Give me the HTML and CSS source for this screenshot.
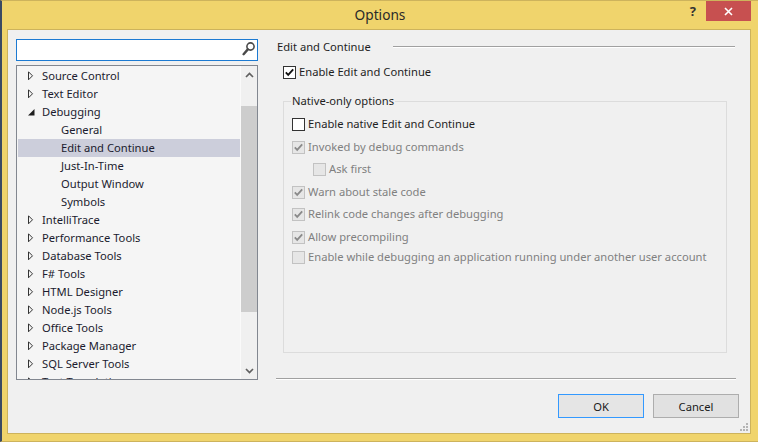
FILE: index.html
```html
<!DOCTYPE html>
<html>
<head>
<meta charset="utf-8">
<link rel="stylesheet" href="styles.css">
</head>
<body>
<div class="window">
  <div class="titlebar">
    <div class="title">Options</div>
    <div class="controls">
      <div class="help">?</div>
      <div class="close">
        <svg width="9" height="9" viewBox="0 0 9 9"><path d="M1 1 L8 8 M8 1 L1 8" stroke="#fff" stroke-width="1.6" fill="none"/></svg>
      </div>
    </div>
  </div>
  <div class="client">
    <div class="left">
      <div class="search">
        <svg class="search-icon" width="14" height="16" viewBox="0 0 14 16"><circle cx="8.5" cy="5.5" r="3.6" stroke="#4a4a4a" stroke-width="1.6" fill="none"/><path d="M5.8 8.4 L1.6 13.2" stroke="#4a4a4a" stroke-width="2.4" stroke-linecap="round"/></svg>
      </div>
      <div class="tree">
        <div class="list">
          <div class="row"><span class="arrow"><svg width="6" height="10" viewBox="0 0 6 10"><path d="M0.5 0.8 L4.5 4.8 L0.5 8.8 Z" fill="none" stroke="#333" stroke-width="1"/></svg></span>Source Control</div>
          <div class="row"><span class="arrow"><svg width="6" height="10" viewBox="0 0 6 10"><path d="M0.5 0.8 L4.5 4.8 L0.5 8.8 Z" fill="none" stroke="#333" stroke-width="1"/></svg></span>Text Editor</div>
          <div class="row"><span class="arrow"><svg width="7" height="7" viewBox="0 0 7 7"><path d="M0 6.5 L6.5 6.5 L6.5 0 Z" fill="#1e1e1e"/></svg></span>Debugging</div>
          <div class="row child">General</div>
          <div class="row child sel">Edit and Continue</div>
          <div class="row child">Just-In-Time</div>
          <div class="row child">Output Window</div>
          <div class="row child">Symbols</div>
          <div class="row"><span class="arrow"><svg width="6" height="10" viewBox="0 0 6 10"><path d="M0.5 0.8 L4.5 4.8 L0.5 8.8 Z" fill="none" stroke="#333" stroke-width="1"/></svg></span>IntelliTrace</div>
          <div class="row"><span class="arrow"><svg width="6" height="10" viewBox="0 0 6 10"><path d="M0.5 0.8 L4.5 4.8 L0.5 8.8 Z" fill="none" stroke="#333" stroke-width="1"/></svg></span>Performance Tools</div>
          <div class="row"><span class="arrow"><svg width="6" height="10" viewBox="0 0 6 10"><path d="M0.5 0.8 L4.5 4.8 L0.5 8.8 Z" fill="none" stroke="#333" stroke-width="1"/></svg></span>Database Tools</div>
          <div class="row"><span class="arrow"><svg width="6" height="10" viewBox="0 0 6 10"><path d="M0.5 0.8 L4.5 4.8 L0.5 8.8 Z" fill="none" stroke="#333" stroke-width="1"/></svg></span>F# Tools</div>
          <div class="row"><span class="arrow"><svg width="6" height="10" viewBox="0 0 6 10"><path d="M0.5 0.8 L4.5 4.8 L0.5 8.8 Z" fill="none" stroke="#333" stroke-width="1"/></svg></span>HTML Designer</div>
          <div class="row"><span class="arrow"><svg width="6" height="10" viewBox="0 0 6 10"><path d="M0.5 0.8 L4.5 4.8 L0.5 8.8 Z" fill="none" stroke="#333" stroke-width="1"/></svg></span>Node.js Tools</div>
          <div class="row"><span class="arrow"><svg width="6" height="10" viewBox="0 0 6 10"><path d="M0.5 0.8 L4.5 4.8 L0.5 8.8 Z" fill="none" stroke="#333" stroke-width="1"/></svg></span>Office Tools</div>
          <div class="row"><span class="arrow"><svg width="6" height="10" viewBox="0 0 6 10"><path d="M0.5 0.8 L4.5 4.8 L0.5 8.8 Z" fill="none" stroke="#333" stroke-width="1"/></svg></span>Package Manager</div>
          <div class="row"><span class="arrow"><svg width="6" height="10" viewBox="0 0 6 10"><path d="M0.5 0.8 L4.5 4.8 L0.5 8.8 Z" fill="none" stroke="#333" stroke-width="1"/></svg></span>SQL Server Tools</div>
          <div class="row"><span class="arrow"><svg width="6" height="10" viewBox="0 0 6 10"><path d="M0.5 0.8 L4.5 4.8 L0.5 8.8 Z" fill="none" stroke="#333" stroke-width="1"/></svg></span>Text Templating</div>
        </div>
        <div class="scrollbar">
          <div class="sb-btn"><svg width="9" height="6" viewBox="0 0 9 6"><path d="M1 5 L4.5 1.5 L8 5" fill="none" stroke="#606060" stroke-width="1.7"/></svg></div>
          <div class="sb-track"><div class="sb-thumb"></div></div>
          <div class="sb-btn"><svg width="9" height="6" viewBox="0 0 9 6"><path d="M1 1 L4.5 4.5 L8 1" fill="none" stroke="#606060" stroke-width="1.7"/></svg></div>
        </div>
      </div>
    </div>
    <div class="right">
      <div class="page">
        <div class="hdr"><span>Edit and Continue</span><span class="hdr-line"></span></div>
        <div class="check-row top-check">
          <span class="cb"><svg width="11" height="11" viewBox="0 0 11 11"><path d="M1.8 5.4 L4.2 7.9 L9.2 2.4" fill="none" stroke="#111" stroke-width="1.8"/></svg></span>
          <span>Enable Edit and Continue</span>
        </div>
        <fieldset class="group">
          <legend>Native-only options</legend>
          <div class="check-row g-row r1">
            <span class="cb"></span>
            <span>Enable native Edit and Continue</span>
          </div>
          <div class="check-row g-row r2 dis">
            <span class="cb"><svg width="11" height="11" viewBox="0 0 11 11"><path d="M1.8 5.4 L4.2 7.9 L9.2 2.4" fill="none" stroke="#8a8a8a" stroke-width="1.8"/></svg></span>
            <span>Invoked by debug commands</span>
          </div>
          <div class="check-row g-row r3 dis indent">
            <span class="cb"></span>
            <span>Ask first</span>
          </div>
          <div class="check-row g-row r4 dis">
            <span class="cb"><svg width="11" height="11" viewBox="0 0 11 11"><path d="M1.8 5.4 L4.2 7.9 L9.2 2.4" fill="none" stroke="#8a8a8a" stroke-width="1.8"/></svg></span>
            <span>Warn about stale code</span>
          </div>
          <div class="check-row g-row r5 dis">
            <span class="cb"><svg width="11" height="11" viewBox="0 0 11 11"><path d="M1.8 5.4 L4.2 7.9 L9.2 2.4" fill="none" stroke="#8a8a8a" stroke-width="1.8"/></svg></span>
            <span>Relink code changes after debugging</span>
          </div>
          <div class="check-row g-row r6 dis">
            <span class="cb"><svg width="11" height="11" viewBox="0 0 11 11"><path d="M1.8 5.4 L4.2 7.9 L9.2 2.4" fill="none" stroke="#8a8a8a" stroke-width="1.8"/></svg></span>
            <span>Allow precompiling</span>
          </div>
          <div class="check-row g-row r7 dis">
            <span class="cb"></span>
            <span>Enable while debugging an application running under another user account</span>
          </div>
        </fieldset>
      </div>
      <div class="sep"></div>
      <div class="buttons">
        <div class="btn default">OK</div>
        <div class="btn">Cancel</div>
      </div>
    </div>
    <svg class="grip" width="9" height="9" viewBox="0 0 9 9"><g fill="#b4b4b4"><rect x="6" y="0" width="2" height="2"/><rect x="3" y="3" width="2" height="2"/><rect x="6" y="3" width="2" height="2"/><rect x="0" y="6" width="2" height="2"/><rect x="3" y="6" width="2" height="2"/><rect x="6" y="6" width="2" height="2"/></g></svg>
  </div>
</div>
</body>
</html>
```

FILE: styles.css
```css
html, body {
  margin: 0;
  padding: 0;
}
body {
  font-family: "Noto Sans", "Open Sans", sans-serif;
  font-size: 11.2px;
  color: #1e1e1e;
  background: #f0d46c;
}
.window {
  width: 758px;
  height: 442px;
  box-sizing: border-box;
  background: #f0d46c;
  border-left: 2px solid #3b4a63;
  border-top: 1px solid #cdb35c;
  border-bottom: 1px solid #cdb35c;
  display: flex;
  flex-direction: column;
  overflow: hidden;
}
.titlebar {
  height: 28px;
  flex-shrink: 0;
  display: grid;
  grid-template-columns: 1fr auto 1fr;
}
.title {
  grid-column: 2;
  font-size: 13.7px;
  line-height: 28px;
  color: #2a2a2a;
}
.controls {
  grid-column: 3;
  justify-self: end;
  display: flex;
  align-items: flex-start;
}
.help {
  font-weight: bold;
  font-size: 13px;
  line-height: 20px;
  color: #333;
  margin-right: 10px;
}
.close {
  width: 45px;
  height: 20px;
  background: #c75050;
  margin-right: 7px;
  display: flex;
  align-items: center;
  justify-content: center;
}
.client {
  flex: 1;
  margin: 0 7px 7px 5px;
  border: 1px solid #cdb35c;
  background: #f0f0f0;
  display: flex;
  padding: 9px 0 0 8px;
  position: relative;
}
.left {
  width: 242px;
  flex-shrink: 0;
}
.search {
  height: 22px;
  box-sizing: border-box;
  border: 1px solid #1c7ad2;
  background: #fff;
  display: flex;
  justify-content: flex-end;
  align-items: flex-start;
}
.search-icon {
  margin-top: 1px;
  margin-right: 1px;
}
.tree {
  margin-top: 4px;
  height: 315px;
  box-sizing: border-box;
  border: 1px solid #828790;
  background: #f5f5f5;
  display: flex;
  overflow: hidden;
}
.list {
  flex: 1;
  padding: 1px 0 0 1px;
  overflow: hidden;
}
.row {
  height: 18px;
  line-height: 18px;
  display: flex;
  align-items: center;
  white-space: nowrap;
  padding-left: 10px;
  color: #1b1b2e;
}
.row.child {
  padding-left: 43px;
}
.row.sel {
  background: #cccedb;
}
.arrow {
  width: 14px;
  flex-shrink: 0;
  display: flex;
  align-items: center;
}
.scrollbar {
  width: 17px;
  flex-shrink: 0;
  background: #f0f0f0;
  border-left: 1px solid #fafafa;
  box-sizing: border-box;
  display: flex;
  flex-direction: column;
}
.sb-btn {
  height: 17px;
  display: flex;
  align-items: center;
  justify-content: center;
  flex-shrink: 0;
}
.sb-track {
  flex: 1;
}
.sb-thumb {
  margin: 23px 0 0 0;
  height: 206px;
  background: #cdcdcd;
}
.right {
  margin-left: 18px;
  width: 460px;
  display: flex;
  flex-direction: column;
}
.page {
  flex: 1;
}
.hdr {
  display: flex;
  align-items: center;
  height: 16px;
  line-height: 16px;
  padding-left: 1px;
}
.hdr-line {
  flex: 1;
  margin-left: 22px;
  margin-right: 1px;
  border-top: 1px solid #a0a0a0;
  border-bottom: 1px solid #fff;
}
.check-row {
  display: flex;
  align-items: center;
  height: 16px;
  line-height: 16px;
  white-space: nowrap;
}
.cb {
  width: 13px;
  height: 13px;
  box-sizing: border-box;
  border: 1px solid #333;
  background: #fff;
  margin-right: 3px;
  display: flex;
  align-items: center;
  justify-content: center;
  flex-shrink: 0;
}
.dis {
  color: #808080;
}
.dis .cb {
  border-color: #c2c2c2;
  background: #e6e6e6;
}
.top-check {
  margin-top: 9px;
  padding-left: 7px;
}
.group {
  margin: 13px 0 0 7px;
  width: 444px;
  box-sizing: border-box;
  border: 1px solid #dcdcdc;
  padding: 0 0 87px 7px;
}
.group legend {
  padding: 0 1px;
  line-height: 16px;
}
.g-row {
  margin-left: 1px;
}
.r1 { margin-top: 7px; }
.r2 { margin-top: 7px; }
.r3 { margin-top: 6px; margin-left: 22px; }
.r4 { margin-top: 7px; }
.r5 { margin-top: 6px; }
.r6 { margin-top: 7px; }
.r7 { margin-top: 4px; }
.sep {
  border-top: 1px solid #a0a0a0;
  border-bottom: 1px solid #fff;
}
.buttons {
  margin-top: 14px;
  margin-bottom: 15px;
  margin-right: -3px;
  display: flex;
  justify-content: flex-end;
  gap: 9px;
}
.btn {
  width: 86px;
  height: 24px;
  box-sizing: border-box;
  border: 1px solid #adadad;
  background: #e1e1e1;
  display: flex;
  align-items: center;
  justify-content: center;
  color: #1a1a1a;
}
.btn.default {
  border-color: #3399ff;
  background: #e5e5e5;
}
.grip {
  position: absolute;
  right: 1px;
  bottom: 1px;
}
```
